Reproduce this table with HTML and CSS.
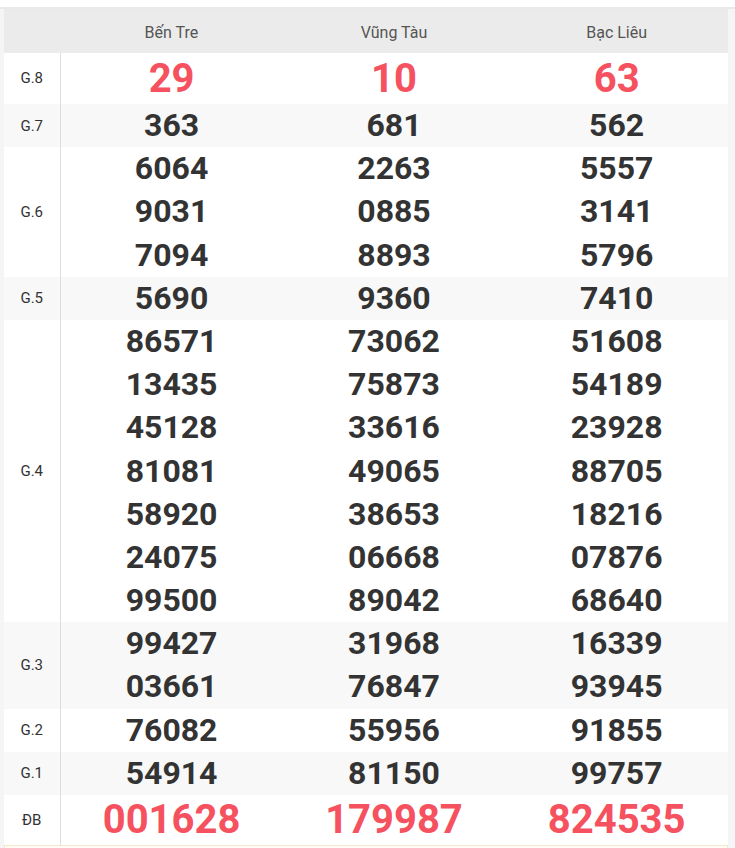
FILE: index.html
```html
<!DOCTYPE html>
<html lang="vi">
<head>
<meta charset="utf-8">
<link rel="stylesheet" href="styles.css">
</head>
<body>
<div class="top"></div>
<div class="wrap">
<table class="kq">
<thead>
<tr><th class="lbl"></th><th>Bến Tre</th><th>Vũng Tàu</th><th>Bạc Liêu</th></tr>
</thead>
<tbody>
<tr class="g8"><td class="lbl">G.8</td><td class="red big">29</td><td class="red big">10</td><td class="red big">63</td></tr>
<tr class="alt"><td class="lbl">G.7</td><td><div>363</div></td><td><div>681</div></td><td><div>562</div></td></tr>
<tr><td class="lbl">G.6</td><td><div>6064</div><div>9031</div><div>7094</div></td><td><div>2263</div><div>0885</div><div>8893</div></td><td><div>5557</div><div>3141</div><div>5796</div></td></tr>
<tr class="alt"><td class="lbl">G.5</td><td><div>5690</div></td><td><div>9360</div></td><td><div>7410</div></td></tr>
<tr><td class="lbl">G.4</td>
<td><div>86571</div><div>13435</div><div>45128</div><div>81081</div><div>58920</div><div>24075</div><div>99500</div></td>
<td><div>73062</div><div>75873</div><div>33616</div><div>49065</div><div>38653</div><div>06668</div><div>89042</div></td>
<td><div>51608</div><div>54189</div><div>23928</div><div>88705</div><div>18216</div><div>07876</div><div>68640</div></td></tr>
<tr class="alt"><td class="lbl">G.3</td><td><div>99427</div><div>03661</div></td><td><div>31968</div><div>76847</div></td><td><div>16339</div><div>93945</div></td></tr>
<tr><td class="lbl">G.2</td><td><div>76082</div></td><td><div>55956</div></td><td><div>91855</div></td></tr>
<tr class="alt"><td class="lbl">G.1</td><td><div>54914</div></td><td><div>81150</div></td><td><div>99757</div></td></tr>
<tr class="db"><td class="lbl">ĐB</td><td class="red big">001628</td><td class="red big">179987</td><td class="red big">824535</td></tr>
</tbody>
</table>
<div class="note"></div>
</div>
</body>
</html>
```
FILE: styles.css
```css
html, body {
  margin: 0;
  padding: 0;
  background: #ffffff;
  font-family: Roboto, "Noto Sans", Arial, sans-serif;
}
.top {
  height: 7px;
  background: #ffffff;
  border-bottom: 2px solid #e9e9ec;
}
.wrap {
  background: #f5f5f8;
  padding: 0 7px 0 4px;
  height: 839px;
}
.kq {
  width: 724px;
  border-collapse: collapse;
  table-layout: fixed;
  background: #ffffff;
}
.kq th {
  background: #ebebeb;
  height: 42px;
  padding: 2px 0 0;
  font-weight: 400;
  font-size: 16px;
  color: #555555;
  text-align: center;
}
.kq th.lbl { width: 56px; }
.kq td {
  padding: 0;
  text-align: center;
  font-weight: 700;
  font-size: 32px;
  line-height: 1.35;
  color: #333333;
}
.kq td div { line-height: 1.35; }
.kq td.lbl {
  font-weight: 400;
  font-size: 15px;
  line-height: 20px;
  color: #333333;
  border-right: 1px solid #dddddd;
}
.kq tr.alt td { background: #f8f8f8; }
.kq td.red { color: #f5515f; }
.kq td.big { font-size: 40px; }
.kq tr.g8 td { height: 51px; line-height: 51px; }
.kq tr.db td { height: 50px; line-height: 50px; }
.note {
  height: 4px;
  background: #fffcf5;
  border: 1px solid #f6e7cc;
  border-bottom: none;
}
```
